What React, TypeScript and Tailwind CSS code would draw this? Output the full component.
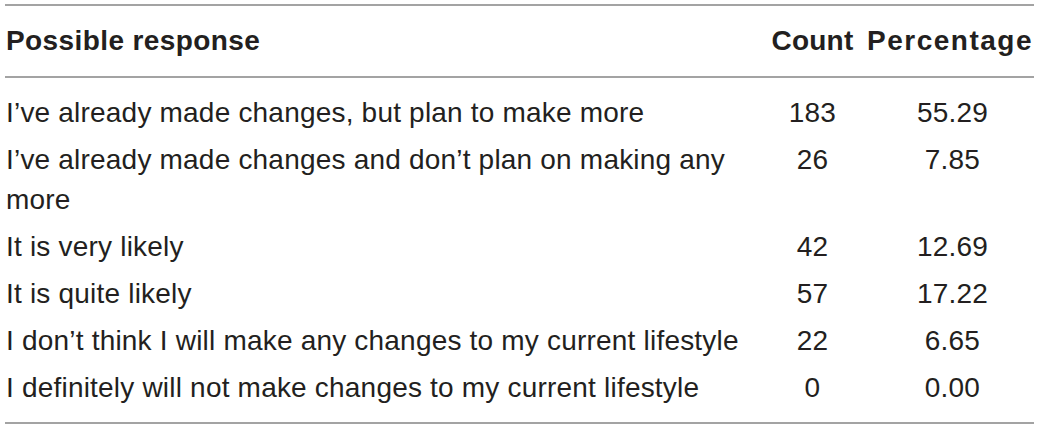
const rows: [string, string, string][] = [
  ["I’ve already made changes, but plan to make more", "183", "55.29"],
  ["I’ve already made changes and don’t plan on making any more", "26", "7.85"],
  ["It is very likely", "42", "12.69"],
  ["It is quite likely", "57", "17.22"],
  ["I don’t think I will make any changes to my current lifestyle", "22", "6.65"],
  ["I definitely will not make changes to my current lifestyle", "0", "0.00"],
];

export default function App() {
  return (
    <div className="w-[1039px] h-[430px] bg-white px-[5px] pt-[4px] font-['Liberation_Sans',Arial,sans-serif] text-[#231f20]">
      <table className="w-[1029px] table-fixed border-collapse">
        <colgroup>
          <col className="w-[755px]" />
          <col className="w-[105px]" />
          <col className="w-[169px]" />
        </colgroup>
        <thead>
          <tr className="border-y-2 border-[#a3a3a3]">
            <th className="h-[72px] pl-[1px] text-left align-middle text-[28px] font-bold tracking-[0.4px]">Possible response</th>
            <th className="text-center align-middle text-[28px] font-bold tracking-[0.2px]">Count</th>
            <th className="pr-[1px] text-right align-middle text-[28px] font-bold tracking-[1.5px] whitespace-nowrap">Percentage</th>
          </tr>
        </thead>
        <tbody className="border-b-2 border-[#a3a3a3] text-[28px] leading-[40px] tracking-[0.2px]">
          {rows.map(([label, count, pct], i) => {
            const pad = i === 0 ? "pt-[15px] pb-[3px]" : i === rows.length - 1 ? "pt-[4px] pb-[14px]" : "pt-[4px] pb-[3px]";
            return (
              <tr key={i}>
                <td className={`pl-[1px] pr-[15px] align-top ${pad}`}>{label}</td>
                <td className={`text-center align-top ${pad}`}>{count}</td>
                <td className={`pl-[6px] text-center align-top ${pad}`}>{pct}</td>
              </tr>
            );
          })}
        </tbody>
      </table>
    </div>
  );
}
